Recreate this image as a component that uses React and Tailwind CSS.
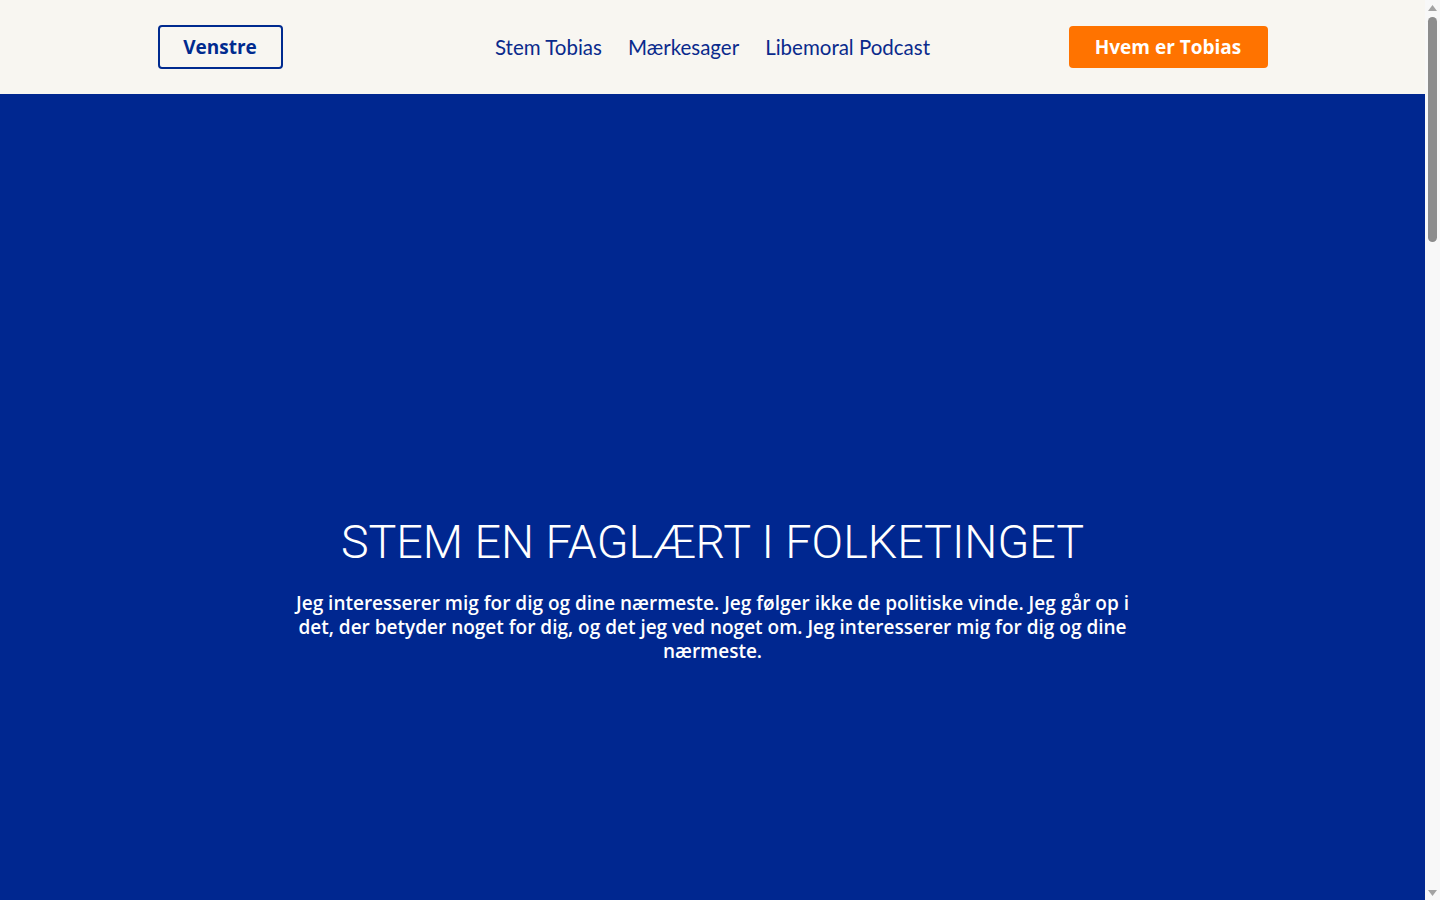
function Scrollbar() {
    return (
        <div className="w-[15px] h-full bg-[#f8f8f8] flex flex-col items-center shrink-0">
            <div className="h-[15px] flex items-center justify-center">
                <svg width="9" height="6" viewBox="0 0 9 6"><path d="M4.5 0 L9 6 L0 6 Z" fill="#a3a3a3" /></svg>
            </div>
            <div className="w-[9px] h-[225px] mt-[2px] rounded-full bg-[#8c8c8c]"></div>
            <div className="flex-1"></div>
            <div className="h-[15px] flex items-center justify-center">
                <svg width="9" height="6" viewBox="0 0 9 6"><path d="M0 0 L9 0 L4.5 6 Z" fill="#a3a3a3" /></svg>
            </div>
        </div>
    );
}

export default function App() {
    return (
        <div className="h-screen flex overflow-hidden bg-[#f8f6f1] font-['Lato','Noto_Sans',sans-serif] text-[#0a2a8c]">
            <div className="flex-1 h-full overflow-hidden">

                {/* Header */}
                <header className="h-[94px] bg-[#f8f6f1]">
                    <div className="max-w-[1110px] h-full mx-auto grid grid-cols-[1fr_auto_1fr] items-center">
                        <a
                            href="#"
                            className="justify-self-start w-[125px] h-[44px] flex items-center justify-center border-2 border-[#002a8f] rounded-[4px] font-['Open_Sans',sans-serif] text-[19px] font-bold text-[#002a8f]"
                        >
                            Venstre
                        </a>
                        <nav className="flex items-center gap-[26px] text-[20.5px] text-[#0a2a8c]">
                            {["Stem Tobias", "Mærkesager", "Libemoral Podcast"].map(link => (
                                <a key={link} href="#" className="hover:text-[#ff7300]">
                                    {link}
                                </a>
                            ))}
                        </nav>
                        <a
                            href="#"
                            className="justify-self-end w-[199px] h-[42px] flex items-center justify-center bg-[#ff7300] rounded-[4px] font-['Open_Sans',sans-serif] text-[19px] font-bold text-white"
                        >
                            Hvem er Tobias
                        </a>
                    </div>
                </header>

                {/* Hero */}
                <section className="h-[994px] bg-[#002790] flex flex-col items-center justify-center text-white text-center">
                    <h1 className="font-['Roboto',sans-serif] text-[46.6px] font-light leading-none">
                        STEM EN FAGLÆRT I FOLKETINGET
                    </h1>
                    <p className="mt-[26px] max-w-[850px] font-['Open_Sans',sans-serif] text-[19px] font-semibold leading-[24px]">
                        Jeg interesserer mig for dig og dine nærmeste. Jeg følger ikke de politiske vinde. Jeg går op i
                        det, der betyder noget for dig, og det jeg ved noget om. Jeg interesserer mig for dig og dine
                        nærmeste.
                    </p>
                </section>
            </div>
            <Scrollbar />
        </div>
    );
}
